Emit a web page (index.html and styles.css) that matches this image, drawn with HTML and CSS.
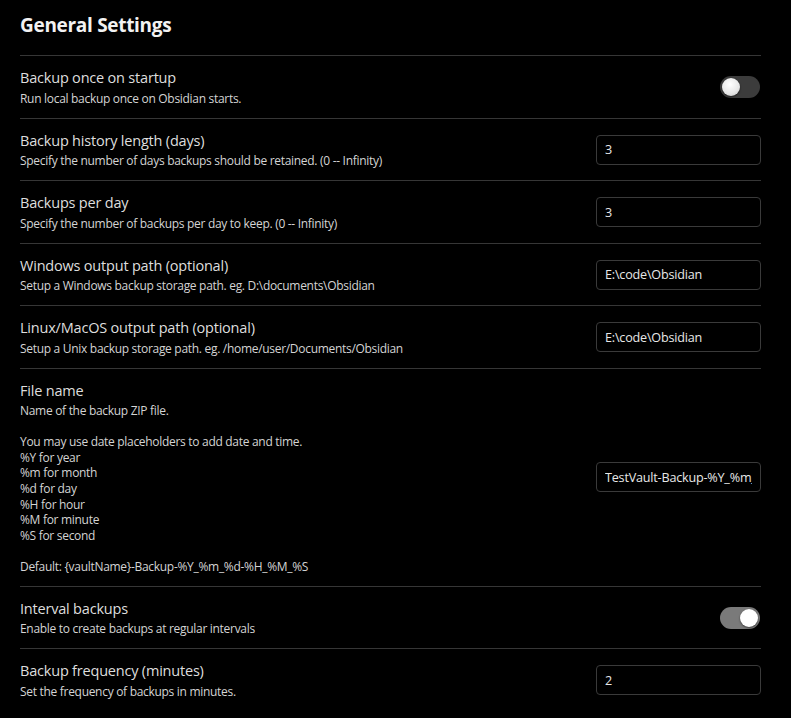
FILE: index.html
```html
<!DOCTYPE html>
<html>
<head>
<meta charset="utf-8">
<link rel="stylesheet" href="styles.css">
</head>
<body>
<div class="settings">
  <h2 class="title">General Settings</h2>

  <div class="item">
    <div class="info">
      <div class="name">Backup once on startup</div>
      <div class="desc">Run local backup once on Obsidian starts.</div>
    </div>
    <div class="control"><div class="toggle"><span class="knob"></span></div></div>
  </div>

  <div class="item">
    <div class="info">
      <div class="name">Backup history length (days)</div>
      <div class="desc">Specify the number of days backups should be retained. (0 -- Infinity)</div>
    </div>
    <div class="control"><input class="text" type="text" value="3"></div>
  </div>

  <div class="item">
    <div class="info">
      <div class="name">Backups per day</div>
      <div class="desc">Specify the number of backups per day to keep. (0 -- Infinity)</div>
    </div>
    <div class="control"><input class="text" type="text" value="3"></div>
  </div>

  <div class="item">
    <div class="info">
      <div class="name">Windows output path (optional)</div>
      <div class="desc">Setup a Windows backup storage path. eg. D:\documents\Obsidian</div>
    </div>
    <div class="control"><input class="text" type="text" value="E:\code\Obsidian"></div>
  </div>

  <div class="item">
    <div class="info">
      <div class="name">Linux/MacOS output path (optional)</div>
      <div class="desc">Setup a Unix backup storage path. eg. /home/user/Documents/Obsidian</div>
    </div>
    <div class="control"><input class="text" type="text" value="E:\code\Obsidian"></div>
  </div>

  <div class="item">
    <div class="info">
      <div class="name">File name</div>
      <div class="desc">Name of the backup ZIP file.<br><br>You may use date placeholders to add date and time.<br>%Y for year<br>%m for month<br>%d for day<br>%H for hour<br>%M for minute<br>%S for second<br><br>Default: {vaultName}-Backup-%Y_%m_%d-%H_%M_%S</div>
    </div>
    <div class="control"><input class="text" type="text" value="TestVault-Backup-%Y_%m_%d-%H_%M_%S"></div>
  </div>

  <div class="item">
    <div class="info">
      <div class="name">Interval backups</div>
      <div class="desc">Enable to create backups at regular intervals</div>
    </div>
    <div class="control"><div class="toggle on"><span class="knob"></span></div></div>
  </div>

  <div class="item">
    <div class="info">
      <div class="name">Backup frequency (minutes)</div>
      <div class="desc">Set the frequency of backups in minutes.</div>
    </div>
    <div class="control"><input class="text" type="text" value="2"></div>
  </div>
</div>
</body>
</html>
```
FILE: styles.css
```css
html, body {
  margin: 0;
  padding: 0;
  background: #000;
}
body {
  font-family: "Open Sans", "Noto Sans", sans-serif;
  color: #dadada;
}
.settings {
  width: 741px;
  padding: 13px 0 0 20px;
  box-sizing: content-box;
}
.title {
  margin: 0 0 18px;
  font-size: 19px;
  line-height: 24px;
  font-weight: 700;
  color: #f2f2f2;
  letter-spacing: -0.3px;
}
.item {
  display: flex;
  align-items: center;
  border-top: 1px solid #363636;
  padding: 12px 0 11.5px;
  gap: 16px;
}
.info {
  flex: 1;
  min-width: 0;
}
.name {
  font-size: 14.5px;
  line-height: 19.5px;
  color: #dedede;
  letter-spacing: -0.2px;
}
.desc {
  padding-top: 3px;
  font-size: 12px;
  line-height: 15.54px;
  color: #d4d4d4;
  letter-spacing: -0.3px;
}
.control {
  display: flex;
  justify-content: flex-end;
  align-items: center;
}
.text {
  width: 165px;
  height: 30px;
  box-sizing: border-box;
  background: #000;
  border: 1px solid #3a3a3a;
  border-radius: 4px;
  padding: 0 8px;
  font-family: "Open Sans", "Noto Sans", sans-serif;
  font-size: 12.6px;
  color: #e8e8e8;
  letter-spacing: -0.2px;
  outline: none;
}
.toggle {
  width: 40px;
  height: 22px;
  border-radius: 11px;
  background: #3c3c3c;
  position: relative;
  margin-right: 1px;
}
.knob {
  position: absolute;
  top: 2px;
  left: 2px;
  width: 18px;
  height: 18px;
  border-radius: 50%;
  background: radial-gradient(circle at 45% 35%, #ffffff 0%, #e6e6e6 60%, #bdbdbd 100%);
  box-shadow: 0 1px 2px rgba(0,0,0,0.5);
}
.toggle.on {
  background: #7a7a7a;
}
.toggle.on .knob {
  left: 20px;
  background: #fff;
}
```
